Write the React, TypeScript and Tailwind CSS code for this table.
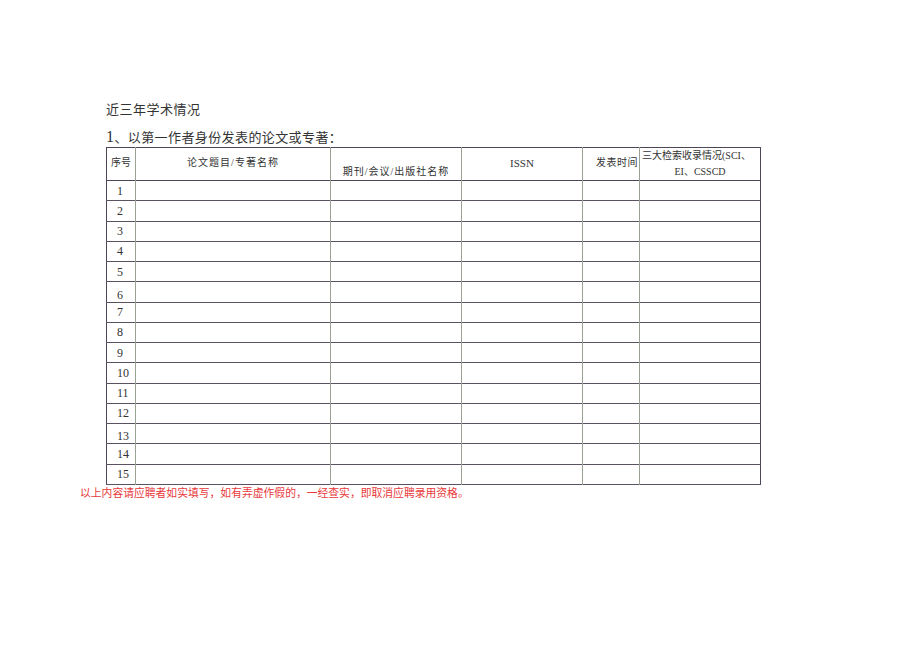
const font = { fontFamily: '"Liberation Serif", "Noto Sans CJK SC", serif' };

const rows = Array.from({ length: 15 }, (_, i) => i + 1);
const lowRows = [6, 13];

export default function App() {
  return (
    <div className="w-[920px] h-[651px] bg-white text-black" style={font}>
      <div className="pt-[101px] pl-[80px]">
        <div className="ml-[26px]">
          <p className="text-[13px] leading-[18px] tracking-[0.5px] text-[#333]">近三年学术情况</p>
          <p className="mt-[9px] text-[13px] leading-[18px] tracking-[0.4px] text-[#333]">
            <span className="text-[16px]">1</span>、以第一作者身份发表的论文或专著：
          </p>
          <table className="w-[654px] table-fixed border-collapse border border-[#4e4656] text-[10px] text-[#333]">
            <colgroup>
              <col className="w-[29px]" />
              <col className="w-[195px]" />
              <col className="w-[131px]" />
              <col className="w-[121px]" />
              <col className="w-[57px]" />
              <col className="w-[121px]" />
            </colgroup>
            <thead>
              <tr className="h-[33px] border-b border-[#4e4656]">
                <th className="border-r border-[#9aa293] align-top pt-[8px] font-normal leading-[14px]">序号</th>
                <th className="border-r border-[#9aa293] align-top pt-[8px] font-normal leading-[14px] tracking-[1px]">论文题目/专著名称</th>
                <th className="border-r border-[#9aa293] align-bottom pb-[1px] font-normal leading-[14px] tracking-[1px]">期刊/会议/出版社名称</th>
                <th className="border-r border-[#9aa293] align-top pt-[8px] font-normal leading-[14px] text-[11px]">ISSN</th>
                <th className="border-r border-[#9aa293] align-top pt-[8px] pr-[1px] text-right font-normal leading-[14px] tracking-[0.5px]">发表时间</th>
                <th className="align-top p-0 font-normal leading-[16px]">
                  <div className="text-left pl-[2px] whitespace-nowrap">三大检索收录情况(SCI、</div>
                  <div>EI、CSSCD</div>
                </th>
              </tr>
            </thead>
            <tbody>
              {rows.map((n) => (
                <tr key={n} className="h-[20.25px] border-b border-[#5a5260]">
                  <td
                    className={`border-r border-[#9aa293] p-0 pl-[10px] text-[12px] leading-[14px] text-[#333] ${
                      lowRows.includes(n) ? 'align-bottom' : 'align-middle'
                    }`}
                  >
                    {n}
                  </td>
                  <td className="border-r border-[#9aa293] p-0" />
                  <td className="border-r border-[#9aa293] p-0" />
                  <td className="border-r border-[#9aa293] p-0" />
                  <td className="border-r border-[#9aa293] p-0" />
                  <td className="p-0" />
                </tr>
              ))}
            </tbody>
          </table>
        </div>
        <p className="mt-[1px] text-[10.8px] leading-[14px] text-[#e8383a]">
          以上内容请应聘者如实填写，如有弄虚作假的，一经查实，即取消应聘录用资格。
        </p>
      </div>
    </div>
  );
}
